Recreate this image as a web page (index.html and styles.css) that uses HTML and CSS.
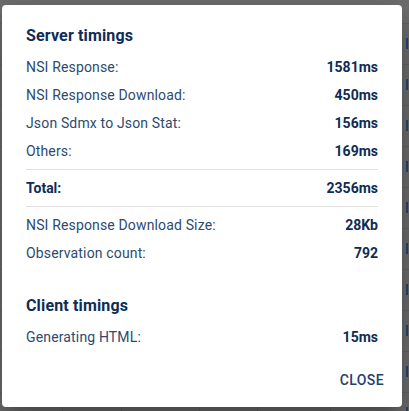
FILE: index.html
```html
<!DOCTYPE html>
<html>
<head>
<meta charset="utf-8">
<link rel="stylesheet" href="styles.css">
</head>
<body>
<div class="backdrop">
  <div class="grid">
    <div class="row"></div><div class="row"></div><div class="row"></div><div class="row"></div>
    <div class="row"></div><div class="row"></div><div class="row"></div><div class="row"></div>
    <div class="row"></div><div class="row"></div>
  </div>
</div>
<div class="dialog">
  <div class="content">
    <h2 class="title">Server timings</h2>
    <div class="item"><span class="label">NSI Response:</span><span class="value">1581ms</span></div>
    <div class="item"><span class="label">NSI Response Download:</span><span class="value">450ms</span></div>
    <div class="item"><span class="label">Json Sdmx to Json Stat:</span><span class="value">156ms</span></div>
    <div class="item"><span class="label">Others:</span><span class="value">169ms</span></div>
    <hr class="divider">
    <div class="item"><span class="label strong">Total:</span><span class="value">2356ms</span></div>
    <hr class="divider">
    <div class="item"><span class="label">NSI Response Download Size:</span><span class="value">28Kb</span></div>
    <div class="item"><span class="label">Observation count:</span><span class="value">792</span></div>
    <h2 class="title second">Client timings</h2>
    <div class="item"><span class="label">Generating HTML:</span><span class="value">15ms</span></div>
  </div>
  <div class="actions"><button class="close">Close</button></div>
</div>
</body>
</html>
```
FILE: styles.css
```css
* { box-sizing: border-box; }
html, body { margin: 0; padding: 0; overflow: hidden; }
body {
  width: 409px;
  height: 411px;
  background: #6e6e6e;
  font-family: Roboto, "Liberation Sans", sans-serif;
  position: relative;
}
.backdrop { width: 409px; height: 411px; overflow: hidden; }
.grid {
  display: flex;
  flex-direction: column;
  padding-top: 23px;
}
.row {
  flex: 0 0 41px;
  height: 41px;
  border-top: 1px solid #656565;
  background:
    linear-gradient(#656565, #656565) 62px 0 / 1px 100% no-repeat,
    linear-gradient(#656565, #656565) 121px 0 / 1px 100% no-repeat,
    linear-gradient(#656565, #656565) 199px 0 / 1px 100% no-repeat,
    linear-gradient(#656565, #656565) 257px 0 / 1px 100% no-repeat,
    linear-gradient(#656565, #656565) 330px 0 / 1px 100% no-repeat,
    linear-gradient(#1d4a7a, #1d4a7a) 406px 14px / 2px 11px no-repeat;
}
.dialog {
  position: absolute;
  left: 2px;
  top: 5px;
  width: 400px;
  height: 402px;
  background: #fff;
  border-radius: 4px;
  box-shadow: 0 11px 15px -7px rgba(0,0,0,.2), 0 24px 38px 3px rgba(0,0,0,.14), 0 9px 46px 8px rgba(0,0,0,.12);
  display: flex;
  flex-direction: column;
}
.content {
  flex: 1;
  padding: 19px 24px 0 24px;
}
.title {
  margin: 0 0 5px 0;
  font-size: 16px;
  line-height: 24px;
  font-weight: 700;
  letter-spacing: 0.15px;
  color: #0e2c55;
}
.title.second { margin-top: 27px; }
.item {
  display: flex;
  justify-content: space-between;
  align-items: center;
  height: 28px;
  font-size: 14px;
  line-height: 20px;
}
.label { color: #2d4a6f; letter-spacing: 0.15px; }
.label.strong { color: #0e2c55; font-weight: 700; letter-spacing: 0; }
.value { color: #0e2c55; font-weight: 700; }
.divider {
  margin: 4px 0 4px 0;
  border: 0;
  height: 1px;
  background: #e0e0e0;
}
.actions {
  display: flex;
  justify-content: flex-end;
  padding: 0 8px 9px 8px;
}
.close {
  height: 36px;
  padding: 0 10px 0 8px;
  border: 0;
  background: none;
  font-family: Roboto, "Liberation Sans", sans-serif;
  font-size: 14px;
  font-weight: 500;
  letter-spacing: 0.4px;
  text-transform: uppercase;
  color: #1f4070;
}
```
